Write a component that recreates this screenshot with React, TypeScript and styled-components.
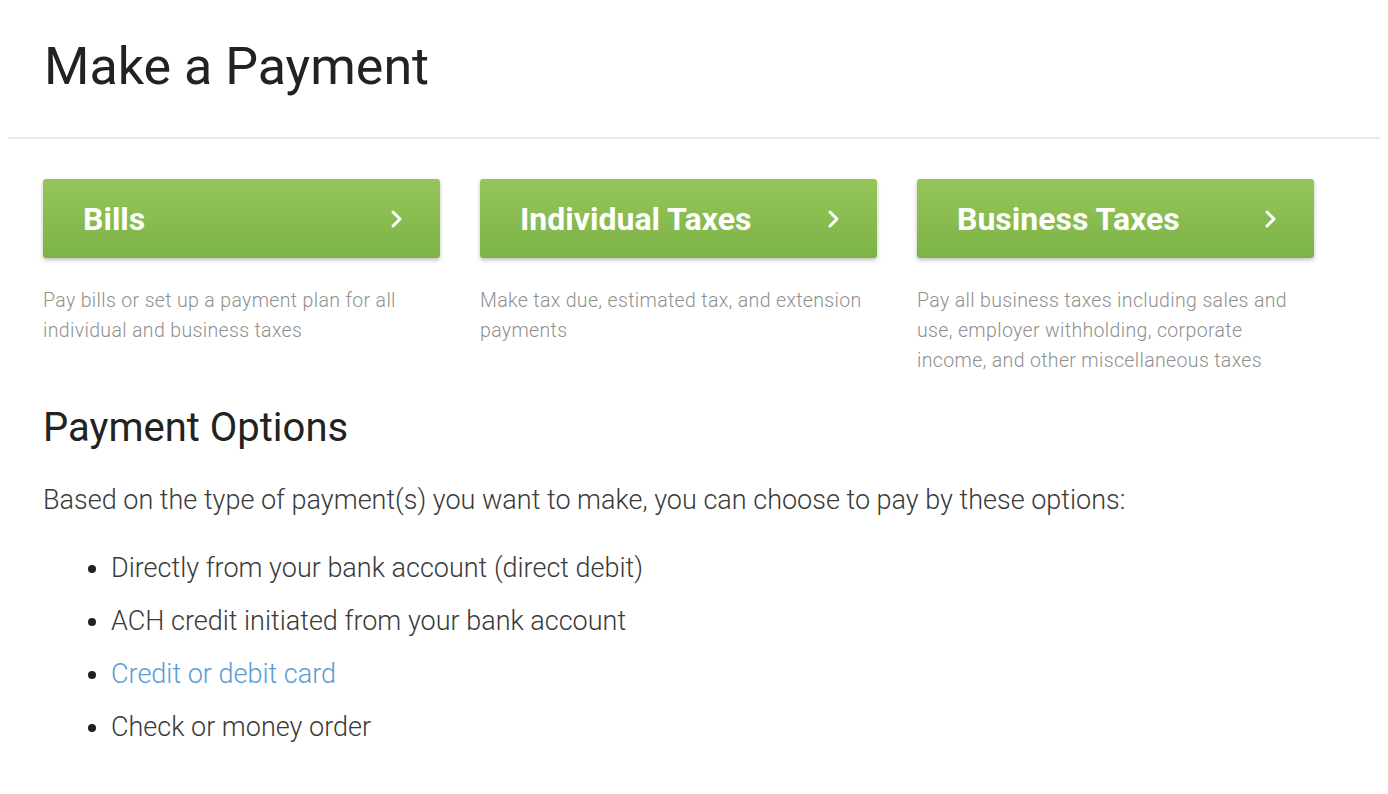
import styled, { createGlobalStyle } from "styled-components";

const GlobalStyle = createGlobalStyle`
  body {
    margin: 8px;
    background: #ffffff;
    font-family: Roboto, "Liberation Sans", Arial, sans-serif;
    color: #222222;
  }
`;

const PageHeader = styled.header`
  margin-right: -8px;
  padding: 28px 0 39px 36px;
  border-bottom: 2px solid #e8e8e8;
`;

const PageTitle = styled.h1`
  margin: 0;
  font-size: 52px;
  font-weight: 400;
  line-height: 62px;
  color: #222222;
`;

const Content = styled.main`
  padding: 40px 35px 0 35px;
`;

const CardGrid = styled.div`
  display: grid;
  grid-template-columns: repeat(3, 397px);
  column-gap: 40px;
`;

const Card = styled.div`
  display: flex;
  flex-direction: column;
`;

const GreenButton = styled.a`
  display: flex;
  align-items: center;
  justify-content: space-between;
  height: 79px;
  padding: 0 36px 0 40px;
  border-radius: 3px;
  background: linear-gradient(#96c55a, #7db346);
  box-shadow: 0 2px 4px rgba(0, 0, 0, 0.25);
  color: #ffffff;
  font-size: 32px;
  font-weight: 700;
  text-decoration: none;
  cursor: pointer;
`;

const CardText = styled.p`
  margin: 28px 0 0 0;
  font-size: 19.5px;
  font-weight: 300;
  letter-spacing: 0.35px;
  line-height: 30px;
  color: #8f8f8f;
`;

const SectionTitle = styled.h2`
  margin: 27px 0 0 0;
  font-size: 40px;
  font-weight: 400;
  line-height: 50px;
  color: #222222;
`;

const Lead = styled.p`
  margin: 29px 0 0 0;
  font-size: 27px;
  font-weight: 300;
  line-height: 36px;
  color: #3a3a3a;
`;

const OptionList = styled.ul`
  margin: 24px 0 0 0;
  padding-left: 68px;
`;

const OptionItem = styled.li`
  font-size: 27px;
  font-weight: 300;
  line-height: 53px;
  color: #3a3a3a;

  &::marker {
    color: #222222;
  }
`;

const OptionLink = styled.a`
  color: #5b9bd5;
  text-decoration: none;
`;

function Chevron() {
  return (
    <svg width="14" height="20" viewBox="0 0 14 20" fill="none">
      <path d="M3 3l7 7-7 7" stroke="#ffffff" strokeWidth="3" strokeLinecap="round" strokeLinejoin="round" />
    </svg>
  );
}

const cards = [
  { title: "Bills", text: "Pay bills or set up a payment plan for all individual and business taxes" },
  { title: "Individual Taxes", text: "Make tax due, estimated tax, and extension payments" },
  {
    title: "Business Taxes",
    text: "Pay all business taxes including sales and use, employer withholding, corporate income, and other miscellaneous taxes",
  },
];

export default function App() {
  return (
    <>
      <GlobalStyle />
      <PageHeader>
        <PageTitle>Make a Payment</PageTitle>
      </PageHeader>
      <Content>
        <CardGrid>
          {cards.map((c) => (
            <Card key={c.title}>
              <GreenButton>
                <span>{c.title}</span>
                <Chevron />
              </GreenButton>
              <CardText>{c.text}</CardText>
            </Card>
          ))}
        </CardGrid>
        <SectionTitle>Payment Options</SectionTitle>
        <Lead>Based on the type of payment(s) you want to make, you can choose to pay by these options:</Lead>
        <OptionList>
          <OptionItem>Directly from your bank account (direct debit)</OptionItem>
          <OptionItem>ACH credit initiated from your bank account</OptionItem>
          <OptionItem>
            <OptionLink>Credit or debit card</OptionLink>
          </OptionItem>
          <OptionItem>Check or money order</OptionItem>
        </OptionList>
      </Content>
    </>
  );
}
